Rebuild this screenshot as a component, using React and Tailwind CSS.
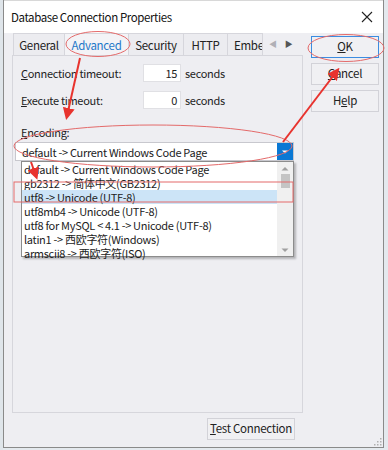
import React from 'react';

const items = [
  'default -> Current Windows Code Page',
  'gb2312 -> 简体中文(GB2312)',
  'utf8 -> Unicode (UTF-8)',
  'utf8mb4 -> Unicode (UTF-8)',
  'utf8 for MySQL < 4.1 -> Unicode (UTF-8)',
  'latin1 -> 西欧字符(Windows)',
  'armscii8 -> 西欧字符(ISO)',
];

const tabs = [
  { name: 'General', w: 'w-[52px]' },
  { name: 'Advanced', w: 'w-[65px]' },
  { name: 'Security', w: 'w-[56px]' },
  { name: 'HTTP', w: 'w-[45px]' },
  { name: 'Embe', w: 'w-[36px]' },
];

const Btn = ({ children, active }) => (
  <div
    className={`h-[22px] flex items-center justify-center bg-[#f0f0f3] text-[11.5px] text-[#222] ${
      active ? 'border border-[#3c8ce0]' : 'border border-[#d2d2d8]'
    }`}
  >
    {children}
  </div>
);

export default function App() {
  return (
    <div
      className="relative w-[388px] h-[450px] overflow-hidden flex bg-[#e4e9ee] tracking-[-0.3px]"
      style={{ fontFamily: '"Noto Sans CJK SC", "Noto Sans", sans-serif' }}
    >
      {/* strip of the window behind */}
      <div className="w-[3px] shrink-0 bg-[#dfe5ea]" />

      {/* dialog */}
      <div className="w-[381px] h-[448px] flex flex-col bg-[#eeeef2] border-l border-r border-b border-[#8a8a8a]">
        {/* title bar */}
        <div className="h-[33px] shrink-0 bg-white flex items-center justify-between pl-[7px] pr-[8px] border-t border-[#d8d8d8]">
          <span className="text-[11.5px] text-[#111] leading-[16px] tracking-[-0.4px]">Database Connection Properties</span>
          <svg width="14" height="14" viewBox="0 0 14 14" className="mr-[1px]">
            <path d="M2 2 L12 12 M12 2 L2 12" stroke="#222" strokeWidth="1.1" />
          </svg>
        </div>

        <div className="flex flex-1">
          {/* left column: tabs + panel */}
          <div className="ml-[8px] w-[291px] flex flex-col">
            <div className="h-[22px] flex items-stretch pl-[2px]">
              {tabs.map((t) => (
                <div
                  key={t.name}
                  className={`${t.w} shrink-0 flex items-center justify-center text-[11.5px] leading-[14px] border border-b-0 border-[#d6d6dc] -ml-px overflow-hidden whitespace-nowrap ${
                    t.name === 'Advanced' ? 'text-[#1e78c8] bg-[#f3f3f6]' : 'text-[#222] bg-[#ececf0]'
                  }`}
                >
                  <span className={t.name === 'Embe' ? 'pl-[6px] w-full' : ''}>{t.name}</span>
                </div>
              ))}
              <div className="flex items-center gap-[8px] pl-[6px] text-[8px] leading-[10px]">
                <span className="text-[#b0b0b6]">◀</span>
                <span className="text-[#555]">▶</span>
              </div>
            </div>

            <div className="h-[358px] border border-[#d6d6dc] bg-[#eeeef2] flex flex-col text-[11px]">
              <div className="mt-[8px] flex items-center h-[18px] text-[#222] leading-[14px]">
                <span className="w-[130px] pl-[8px]"><u>C</u>onnection timeout:</span>
                <div className="w-[38px] h-[18px] bg-white border border-[#e0e0e4] text-right pr-[3px] leading-[16px]">15</div>
                <span className="ml-[4px]">seconds</span>
              </div>
              <div className="mt-[9px] flex items-center h-[18px] text-[#222] leading-[14px]">
                <span className="w-[130px] pl-[8px]"><u>E</u>xecute timeout:</span>
                <div className="w-[38px] h-[18px] bg-white border border-[#e0e0e4] text-right pr-[3px] leading-[16px]">0</div>
                <span className="ml-[4px]">seconds</span>
              </div>
              <div className="mt-[15px] pl-[8px] text-[#222] h-[16px] leading-[16px]">
                <u>E</u>ncoding:
              </div>
              <div className="mt-[2px] ml-[2px] w-[279px] h-[19px] bg-white border border-[#c8c8ce] flex items-center">
                <div className="flex-1 pl-[6px] text-[11px] text-[#222] leading-[14px] whitespace-nowrap">
                  default -&gt; Current Windows Code Page
                </div>
                <div className="w-[16px] h-full bg-[#0a78d4] flex items-center justify-center">
                  <svg width="8" height="6" viewBox="0 0 8 6">
                    <path d="M1 1.5 H7 L4 4.5 Z" fill="#fff" />
                  </svg>
                </div>
              </div>
              <div className="ml-[8px] w-[273px] h-[96px] bg-white border border-[#8c8c8c] shadow-[2px_2px_2px_rgba(0,0,0,0.25)] flex">
                <div className="flex-1 flex flex-col">
                  {items.map((it, i) => (
                    <div
                      key={it}
                      className={`h-[14px] leading-[14px] pl-[2px] text-[11px] text-[#222] whitespace-nowrap ${
                        i === 2 ? 'bg-[#cce4f7]' : ''
                      }`}
                    >
                      {it}
                    </div>
                  ))}
                </div>
                <div className="w-[16px] bg-[#f0f0f0] flex flex-col items-center">
                  <div className="h-[12px] flex items-center">
                    <svg width="8" height="5" viewBox="0 0 8 5"><path d="M0.5 4.5 L4 1 L7.5 4.5 Z" fill="#a0a0a0" /></svg>
                  </div>
                  <div className="w-[9px] h-[14px] bg-[#c4c4c4]" />
                  <div className="flex-1" />
                  <div className="h-[12px] flex items-center">
                    <svg width="8" height="5" viewBox="0 0 8 5"><path d="M0.5 0.5 L4 4 L7.5 0.5 Z" fill="#a0a0a0" /></svg>
                  </div>
                </div>
              </div>
            </div>

            <div className="mt-[5px] flex justify-end pr-[8px]">
              <div className="w-[88px] h-[22px] border border-[#d2d2d8] bg-[#f0f0f3] flex items-center justify-center text-[11.5px] text-[#222] whitespace-nowrap">
                <span><u>T</u>est Connection</span>
              </div>
            </div>
          </div>

          {/* right column: buttons */}
          <div className="ml-[8px] w-[68px] pt-[3px] flex flex-col gap-[5px]">
            <Btn active><span><u>O</u>K</span></Btn>
            <Btn><span><u>C</u>ancel</span></Btn>
            <Btn><span>H<u>e</u>lp</span></Btn>
          </div>
        </div>
      </div>

      {/* red annotation marks */}
      <svg className="absolute left-0 top-0 pointer-events-none" width="388" height="450">
        <defs>
          <marker id="ah" markerWidth="6" markerHeight="6" refX="4" refY="3" orient="auto">
            <path d="M0 0 L6 3 L0 6 Z" fill="#e8332e" />
          </marker>
        </defs>
        <ellipse cx="98" cy="44" rx="32" ry="12.5" fill="none" stroke="#e46a6a" strokeWidth="1" />
        <ellipse cx="346" cy="48" rx="38" ry="13.5" fill="none" stroke="#e46a6a" strokeWidth="1" />
        <ellipse cx="153" cy="146" rx="139" ry="21" fill="none" stroke="#e46a6a" strokeWidth="1" />
        <rect x="14" y="182" width="279" height="20" fill="none" stroke="#e46a6a" strokeWidth="1" />
        <line x1="80" y1="58" x2="67" y2="116" stroke="#e8332e" strokeWidth="2" markerEnd="url(#ah)" />
        <line x1="31" y1="162" x2="36" y2="176" stroke="#e8332e" strokeWidth="2" markerEnd="url(#ah)" />
        <line x1="283" y1="142" x2="337" y2="71" stroke="#e8332e" strokeWidth="2" markerEnd="url(#ah)" />
      </svg>

      {/* size grip */}
      <svg className="absolute right-[6px] bottom-[4px]" width="8" height="8" viewBox="0 0 8 8">
        <rect x="6" y="0" width="1.5" height="1.5" fill="#b0b0b0" />
        <rect x="3" y="3" width="1.5" height="1.5" fill="#b0b0b0" />
        <rect x="6" y="3" width="1.5" height="1.5" fill="#b0b0b0" />
        <rect x="0" y="6" width="1.5" height="1.5" fill="#b0b0b0" />
        <rect x="3" y="6" width="1.5" height="1.5" fill="#b0b0b0" />
        <rect x="6" y="6" width="1.5" height="1.5" fill="#b0b0b0" />
      </svg>
    </div>
  );
}
